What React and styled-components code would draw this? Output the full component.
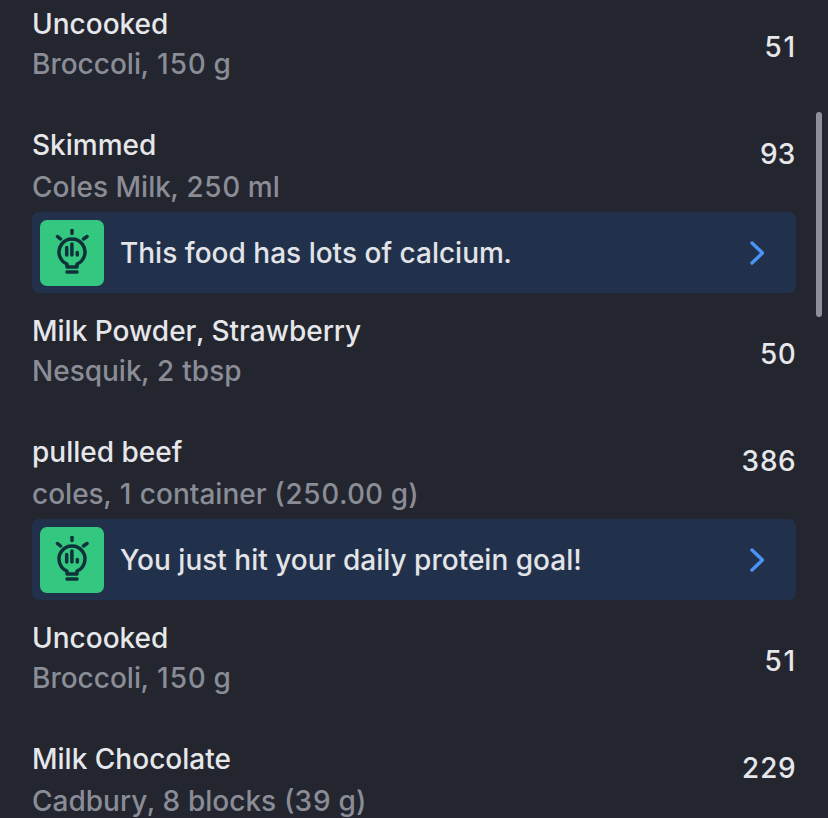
import React from "react";
import styled, { createGlobalStyle } from "styled-components";

const GlobalStyle = createGlobalStyle`
  html, body {
    margin: 0;
    padding: 0;
    background: #23252f;
  }
`;

const Screen = styled.div`
  position: relative;
  height: 818px;
  overflow: hidden;
  background: #23252f;
  font-family: Inter, "Liberation Sans", sans-serif;
  font-size: 28px;
  font-variant-numeric: tabular-nums;
  line-height: 40px;
`;

const List = styled.div`
  display: flex;
  flex-direction: column;
  padding: 4px 32px 0;
`;

const Entry = styled.div`
  margin-bottom: ${(props) => (props.$hasTip ? "18px" : "41px")};
`;

const FoodRow = styled.div`
  display: flex;
  justify-content: space-between;
  align-items: flex-start;
`;

const FoodName = styled.div`
  color: #e6e7ea;
  font-weight: 500;
`;

const FoodDetail = styled.div`
  color: #8a8d96;
  font-weight: 500;
  margin-top: ${(props) => (props.$wide ? "2px" : "0")};
`;

const Calories = styled.div`
  color: #e6e7ea;
  font-weight: 500;
  margin-top: ${(props) => (props.$wide ? "9px" : "23px")};
`;

// the tabular 1 is too wide next to the other digits
const DigitOne = styled.span`
  font-variant-numeric: normal;
  padding: 0 1px;
`;

const TipCard = styled.div`
  display: flex;
  align-items: center;
  height: 81px;
  margin-top: 5px;
  padding: 0 32px 0 8px;
  border-radius: 7px;
  background: #22314b;
`;

const TipBadge = styled.div`
  display: flex;
  align-items: center;
  justify-content: center;
  width: 64px;
  height: 66px;
  flex-shrink: 0;
  border-radius: 7px;
  background: #33c77f;
`;

const TipText = styled.div`
  flex: 1;
  margin-left: 16px;
  color: #e2e4e8;
  font-weight: 500;
`;

const ScrollThumb = styled.div`
  position: absolute;
  top: 112px;
  left: 816px;
  width: 6px;
  height: 205px;
  border-radius: 3px;
  background: #8e9099;
`;

const foods = [
  { name: "Uncooked", detail: "Broccoli, 150 g", calories: "51" },
  {
    name: "Skimmed",
    detail: "Coles Milk, 250 ml",
    calories: "93",
    wide: true,
    tip: "This food has lots of calcium.",
  },
  { name: "Milk Powder, Strawberry", detail: "Nesquik, 2 tbsp", calories: "50" },
  {
    name: "pulled beef",
    detail: "coles, 1 container (250.00 g)",
    calories: "386",
    wide: true,
    tip: "You just hit your daily protein goal!",
  },
  { name: "Uncooked", detail: "Broccoli, 150 g", calories: "51" },
  {
    name: "Milk Chocolate",
    detail: "Cadbury, 8 blocks (39 g)",
    calories: "229",
    wide: true,
  },
];

function Digits({ text }) {
  return text
    .split(/(1)/)
    .map((part, i) =>
      part === "1" ? <DigitOne key={i}>1</DigitOne> : part
    );
}

function BulbIcon() {
  return (
    <svg
      width="40"
      height="48"
      viewBox="0 0 40 48"
      fill="none"
      stroke="#10303a"
      strokeWidth="3.5"
      strokeLinecap="round"
      strokeLinejoin="round"
    >
      <path d="M15 35A13 13 0 1 1 25 35V38H15Z" />
      <path d="M15 43H25" />
      <path d="M20 1V4.5M5.5 7.5L8.5 10M35 7.5L31.5 10" />
      <path d="M14.7 18.5V26M19.9 15V26M25.3 23.5V26" />
    </svg>
  );
}

function Chevron() {
  return (
    <svg
      width="14"
      height="24"
      viewBox="0 0 14 24"
      fill="none"
      stroke="#4b94f5"
      strokeWidth="3.4"
      strokeLinecap="round"
      strokeLinejoin="round"
    >
      <path d="M2 2L12.5 12L2 22" />
    </svg>
  );
}

function Tip({ text }) {
  return (
    <TipCard>
      <TipBadge>
        <BulbIcon />
      </TipBadge>
      <TipText>{text}</TipText>
      <Chevron />
    </TipCard>
  );
}

export default function App() {
  return (
    <>
      <GlobalStyle />
      <Screen>
        <List>
          {foods.map((food, index) => (
            <Entry key={index} $hasTip={!!food.tip}>
              <FoodRow>
                <div>
                  <FoodName>{food.name}</FoodName>
                  <FoodDetail $wide={food.wide}>
                    <Digits text={food.detail} />
                  </FoodDetail>
                </div>
                <Calories $wide={food.wide}>
                  <Digits text={food.calories} />
                </Calories>
              </FoodRow>
              {food.tip && <Tip text={food.tip} />}
            </Entry>
          ))}
        </List>
        <ScrollThumb />
      </Screen>
    </>
  );
}
